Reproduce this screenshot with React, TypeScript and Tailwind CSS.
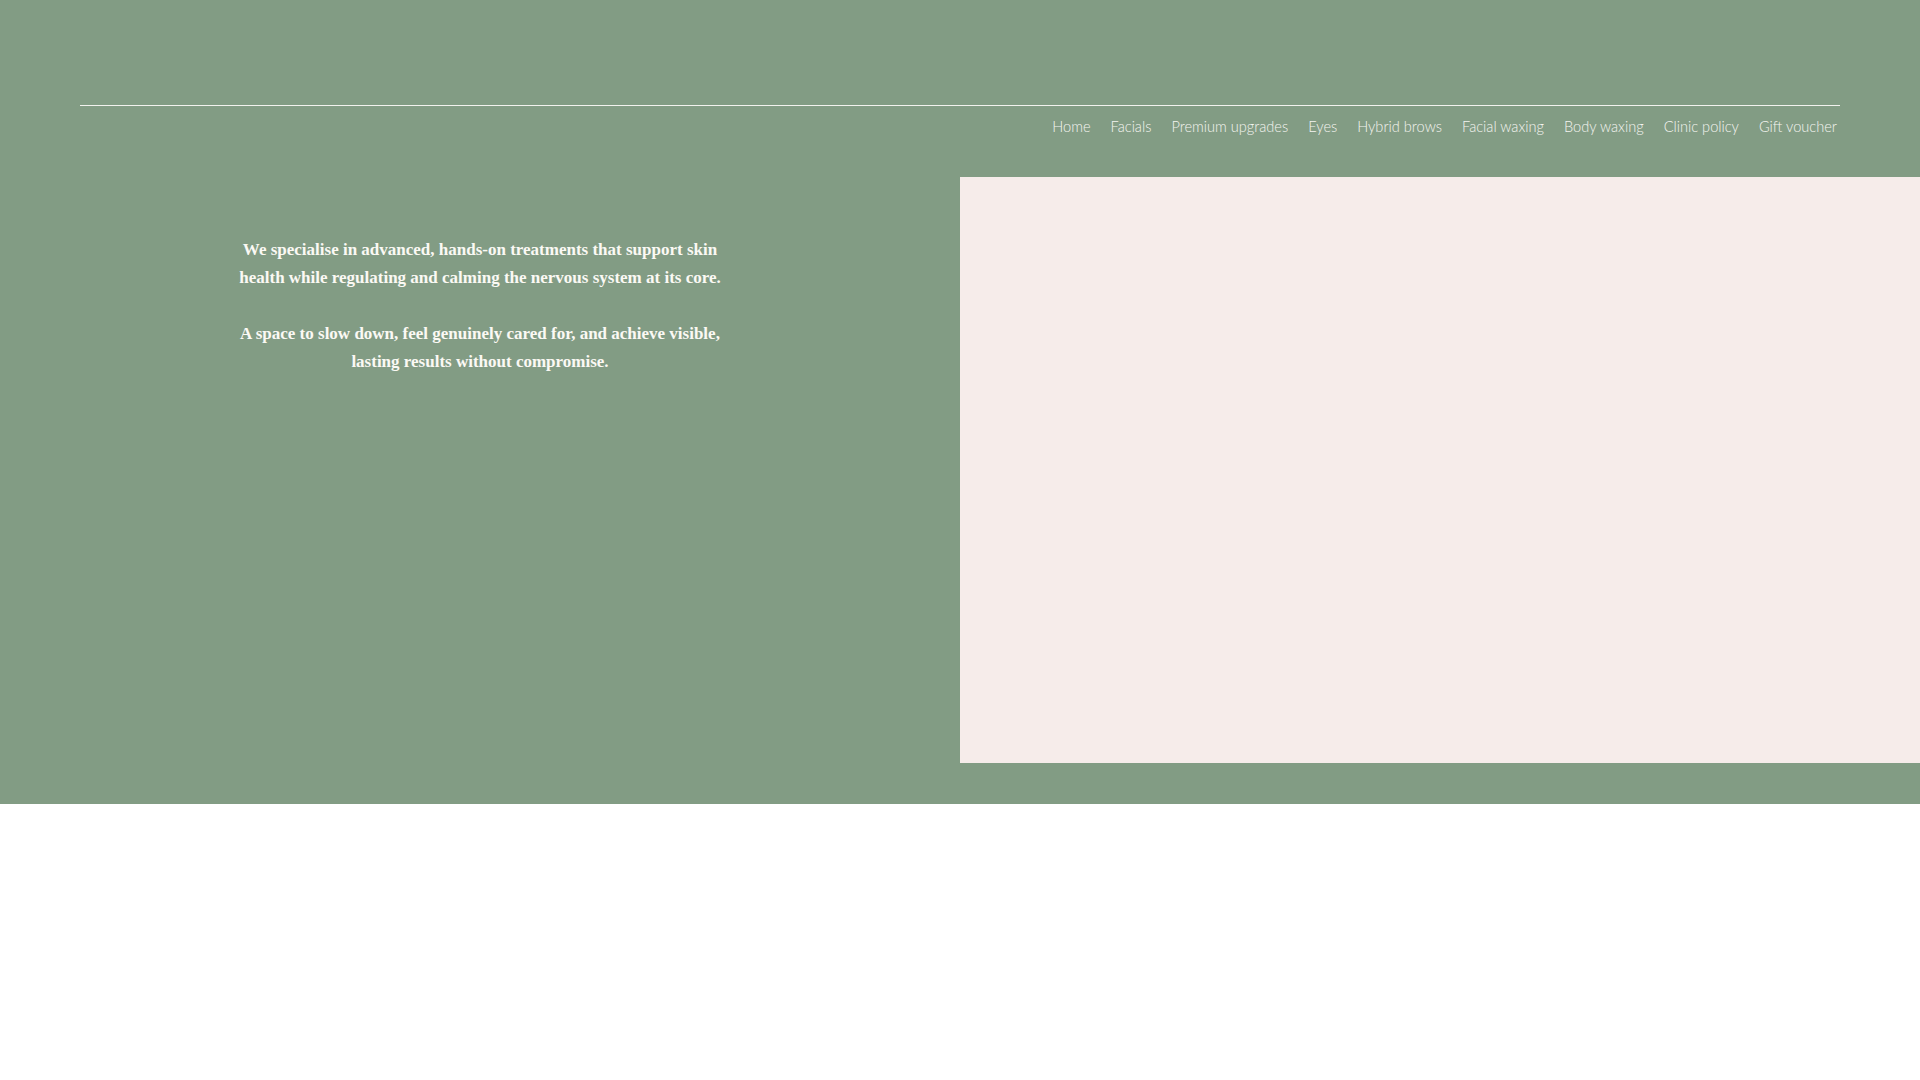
const navItems = [
  'Home',
  'Facials',
  'Premium upgrades',
  'Eyes',
  'Hybrid brows',
  'Facial waxing',
  'Body waxing',
  'Clinic policy',
  'Gift voucher',
];

export default function App() {
  return (
    <div className="min-h-screen bg-white">
      <section className="bg-[#829c84] pt-[105px] pb-[41px]">
        <div className="mx-[80px] h-px bg-[#f2f2ee]" />
        <nav className="flex justify-end gap-[20px] pr-[83px] pt-[11px] font-['Lato','Open_Sans',sans-serif] text-[14.6px] leading-[20px] font-light text-[#f4f4f0]">
          {navItems.map((item) => (
            <a key={item} href="#" className="whitespace-nowrap">
              {item}
            </a>
          ))}
        </nav>

        <div className="mt-[40px] grid grid-cols-2">
          <div className="flex justify-center pt-[59px]">
            <div className="text-center font-['Liberation_Serif','DejaVu_Serif',serif] text-[17px] leading-[28px] font-bold text-[#fbf9f4]">
              <p>
                We specialise in advanced, hands-on treatments that support skin
                <br />
                health while regulating and calming the nervous system at its core.
              </p>
              <p className="mt-[28px]">
                A space to slow down, feel genuinely cared for, and achieve visible,
                <br />
                lasting results without compromise.
              </p>
            </div>
          </div>
          <div className="h-[586px] bg-[#f6ecea]" />
        </div>
      </section>
    </div>
  );
}
